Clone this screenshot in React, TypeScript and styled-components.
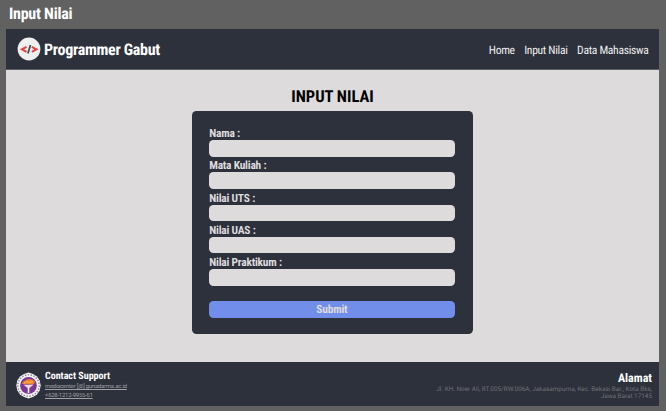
import React from "react";
import styled, { createGlobalStyle } from "styled-components";

const GlobalStyle = createGlobalStyle`
  * { box-sizing: border-box; }
  html, body { margin: 0; background: #616161; }
  body {
    font-family: "Roboto Condensed", Roboto, sans-serif;
    font-stretch: 75%;
    text-rendering: geometricPrecision;
    overflow: hidden;
  }
`;

const Page = styled.div`
  width: 666px;
  height: 411px;
  padding: 0 7px 5px 6px;
  display: flex;
  flex-direction: column;
  background: #616161;
`;

const ScreenTitle = styled.div`
  flex: 0 0 29px;
  padding: 4px 0 0 3px;
  font-size: 16px;
  line-height: 19px;
  font-weight: 700;
  letter-spacing: -0.25px;
  color: #fff;
`;

const Frame = styled.div`
  flex: 1;
  display: flex;
  flex-direction: column;
  background: #dddbdc;
`;

const Header = styled.header`
  flex: 0 0 41px;
  display: flex;
  align-items: center;
  justify-content: space-between;
  padding: 0 10.5px 0 11px;
  border-bottom: 1px solid #5d5e66;
  background: #2d313c;
  color: #fff;
`;

const Brand = styled.div`
  display: flex;
  align-items: center;
  gap: 3px;
  font-size: 16px;
  font-weight: 700;
  line-height: 20px;
  letter-spacing: -0.3px;
  svg { display: block; }
  span { padding-top: 2px; }
`;

const Nav = styled.nav`
  display: flex;
  gap: 9.5px;
  padding-top: 1px;
  font-size: 11.6px;
  line-height: 16px;
  letter-spacing: -0.3px;
  color: #eee;
`;

const Main = styled.main`
  flex: 1;
  display: flex;
  flex-direction: column;
  align-items: center;
  padding-top: 17.5px;
`;

const Heading = styled.h1`
  margin: 0 0 3px;
  font-size: 16.5px;
  line-height: 20px;
  font-weight: 700;
  color: #000;
`;

const Card = styled.form`
  width: 281px;
  height: 223.5px;
  padding: 16.7px 18.5px 0 17.2px;
  border-radius: 4.5px;
  background: #2d313c;
`;

const Field = styled.label`
  display: block;
  height: 32.2px;
  font-size: 11.4px;
  font-weight: 700;
  line-height: 13px;
  letter-spacing: -0.2px;
  color: #dddbdc;
`;

const Input = styled.input`
  display: block;
  width: 100%;
  height: 16.7px;
  padding: 0 5px;
  border: 0;
  border-radius: 4.5px;
  background: #dddbdc;
`;

const Submit = styled.button`
  display: block;
  width: 100%;
  height: 16.7px;
  margin-top: 13px;
  padding: 0;
  border: 0;
  border-radius: 4.5px;
  background: #718eea;
  color: #dddbdc;
  font: inherit;
  font-stretch: 75%;
  font-size: 11.4px;
  font-weight: 700;
  letter-spacing: -0.2px;
  text-rendering: inherit;
`;

const Footer = styled.footer`
  flex: 0 0 44px;
  display: flex;
  justify-content: space-between;
  padding: 7px 7px 0 9px;
  background: #2d313c;
`;

const Support = styled.div`
  display: flex;
  gap: 3px;
  svg { display: block; margin-top: 2.5px; }
`;

const FooterTitle = styled.div`
  padding-top: 1px;
  font-size: 10px;
  line-height: 13px;
  font-weight: 700;
  color: #fff;
`;

const ContactLink = styled.a`
  display: block;
  font-family: Roboto, sans-serif;
  font-stretch: 100%;
  font-size: 5.8px;
  line-height: 8.7px;
  letter-spacing: -0.16px;
  color: #a2a2a4;
  text-decoration: underline;
`;

const Address = styled.div`
  text-align: right;
  font-family: Roboto, sans-serif;
  font-stretch: 100%;
  font-size: 6.38px;
  line-height: 7.4px;
  color: #707074;
`;

const AddressTitle = styled(FooterTitle)`
  padding-top: 1.5px;
  font-family: "Roboto Condensed", Roboto, sans-serif;
  font-stretch: 75%;
  font-size: 12px;
  line-height: 15px;
`;

const CodeLogo = () => (
  <svg width="24" height="24" viewBox="0 0 24 24" fill="none">
    <circle cx="12" cy="12" r="11.4" fill="#efefef" />
    <path d="M9.5 9.8 5 12.3 9.5 14.8M14.8 9.8 19.3 12.3 14.800 14.800" stroke="#e2443f" strokeWidth="2.1" />
    <path d="M13.5 8 10.9 16.5" stroke="#345260" strokeWidth="1.8" />
  </svg>
);

const UniversitySeal = () => (
  <svg width="27" height="27" viewBox="0 0 27 27" fill="none">
    <path d="M13.5.5 18 2l4 2.4 2.7 4 1 5-1 5-2.7 4-4 2.7-4.5 1.3-4.5-1.3-4-2.7-2.7-4-1-5 1-5L5 4.4 9 2Z" fill="#f4f2f4" />
    <circle cx="13.5" cy="13.5" r="10.7" stroke="#8a868f" strokeWidth="1.5" strokeDasharray="1.4 1.5" />
    <circle cx="13.5" cy="13.5" r="8.4" fill="#7c3792" />
    <path d="M7.2 12c0-2.300 1.500-2.500 2.800-3.500 1 .5 1.500-2 3-1 1-1.300 2.500 0 3.500 0 1.800-.5 2 1.500 3.500 2-1 1.500 0 2-2.500 3Z" fill="#ee8234" />
    <path d="M9 11.200 12 9.600l2 1 3.500-1" stroke="#f5bc42" />
    <path d="M8.500 12.800h10l-3.700 3h-2.600Z" fill="#f4d9dc" />
    <path d="M13.500 15v6" stroke="#fff" strokeWidth="1.500" />
  </svg>
);

const fields = ["Nama :", "Mata Kuliah :", "Nilai UTS :", "Nilai UAS :", "Nilai Praktikum :"];

export default function App() {
  return (
    <Page>
      <GlobalStyle />
      <ScreenTitle>Input Nilai</ScreenTitle>
      <Frame>
        <Header>
          <Brand><CodeLogo /><span>Programmer Gabut</span></Brand>
          <Nav><span>Home</span><span>Input Nilai</span><span>Data Mahasiswa</span></Nav>
        </Header>
        <Main>
          <Heading>INPUT NILAI</Heading>
          <Card>
            {fields.map((label) => <Field key={label}>{label}<Input /></Field>)}
            <Submit type="button">Submit</Submit>
          </Card>
        </Main>
        <Footer>
          <Support>
            <UniversitySeal />
            <div>
              <FooterTitle>Contact Support</FooterTitle>
              <ContactLink>mediacenter [@] gunadarma.ac.id</ContactLink>
              <ContactLink>+628-1212-9955-61</ContactLink>
            </div>
          </Support>
          <Address>
            <AddressTitle>Alamat</AddressTitle>
            Jl. KH. Noer Ali, RT.005/RW.006A, Jakasampurna, Kec. Bekasi Bar., Kota Bks,<br />Jawa Barat 17145
          </Address>
        </Footer>
      </Frame>
    </Page>
  );
}
